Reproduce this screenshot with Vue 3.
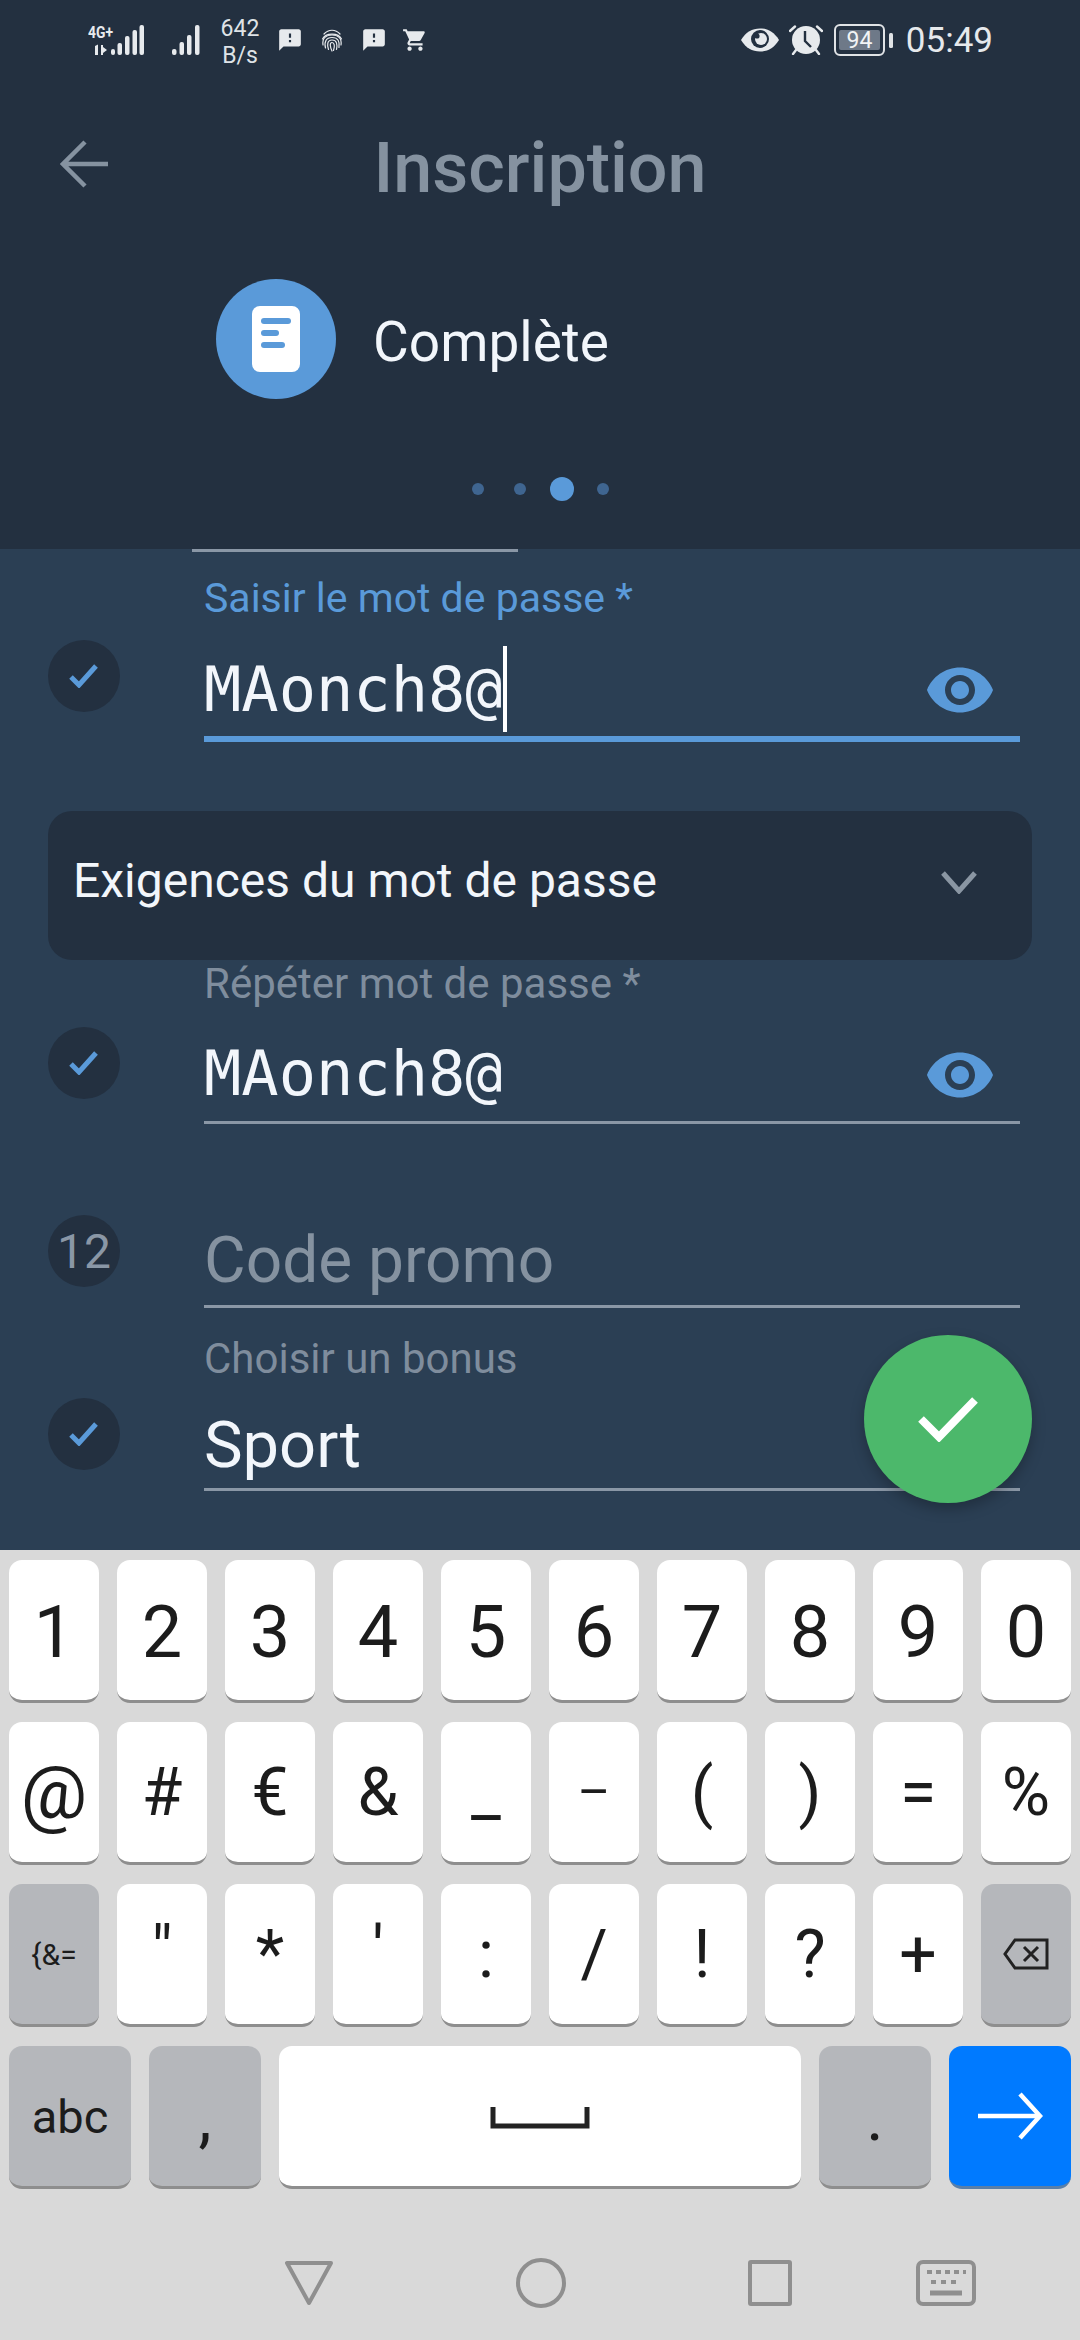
<script setup>
const row1 = ['1','2','3','4','5','6','7','8','9','0']
const row2 = ['@','#','€','&','_','–','(',')','=','%']
const row3 = ['"','*',"'",':','/','!','?','+']
const eyePath = 'M12 4.5C7 4.5 2.73 7.61 1 12c1.73 4.39 6 7.5 11 7.5s9.27-3.11 11-7.5c-1.73-4.39-6-7.5-11-7.5zM12 17c-2.76 0-5-2.24-5-5s2.24-5 5-5 5 2.24 5 5-2.24 5-5 5zm0-8c-1.66 0-3 1.34-3 3s1.34 3 3 3 3-1.34 3-3-1.34-3-3-3z'
const bubble = 'M20 2H4c-1.1 0-1.99.9-1.99 2L2 22l4-4h14c1.1 0 2-.9 2-2V4c0-1.1-.9-2-2-2zm-7 12h-2v-2h2v2zm0-4h-2V6h2v4z'
const cart = 'M7 18c-1.1 0-1.99.9-1.99 2S5.9 22 7 22s2-.9 2-2-.9-2-2-2zM1 2v2h2l3.6 7.59-1.35 2.45c-.16.28-.25.61-.25.96 0 1.1.9 2 2 2h12v-2H7.42c-.14 0-.25-.11-.25-.25l.03-.12.9-1.63h7.45c.75 0 1.41-.41 1.75-1.03l3.58-6.49c.08-.14.12-.31.12-.48 0-.55-.45-1-1-1H5.21l-.94-2H1zm16 16c-1.1 0-1.99.9-1.99 2s.89 2 1.99 2 2-.9 2-2-.9-2-2-2z'
</script>

<template>
  <div class="app">
    <header class="top">
      <div class="status">
        <svg class="sig1" width="57" height="38" viewBox="0 -6 57 38">
          <text x="0" y="13.5" textLength="25" lengthAdjust="spacingAndGlyphs" class="net">4G+</text>
          <path d="M7 22l3-1.5V31H7zM13 21h2v2l4 3-4 3v2h-2z" fill="#e7eaed"/>
          <rect x="23" y="25" width="4" height="6" rx="2" fill="#e7eaed"/>
          <rect x="29.5" y="19" width="4.5" height="12" rx="2" fill="#e7eaed"/>
          <rect x="37" y="12" width="4.5" height="19" rx="2" fill="#e7eaed"/>
          <rect x="44.5" y="6" width="4.5" height="25" rx="2" fill="#e7eaed"/>
          <rect x="51.5" y="1" width="4.5" height="30" rx="2" fill="#e7eaed"/>
        </svg>
        <svg class="sig2" width="33" height="32" viewBox="0 0 33 32">
          <rect x="0" y="25" width="4.5" height="6" rx="2" fill="#e7eaed"/>
          <rect x="7.5" y="18" width="4.5" height="13" rx="2" fill="#e7eaed"/>
          <rect x="15" y="11" width="4.5" height="20" rx="2" fill="#e7eaed"/>
          <rect x="23" y="1" width="4.5" height="30" rx="2" fill="#e7eaed"/>
        </svg>
        <div class="speed"><span>642</span><span>B/s</span></div>
        <svg class="bub1" width="26" height="26" viewBox="0 0 24 24"><path :d="bubble" fill="#e7eaed"/></svg>
        <svg class="finger" width="22" height="24" viewBox="0 0 22 24" fill="none" stroke="#e7eaed" stroke-width="1.2" stroke-linecap="round">
          <path d="M3 6c4.500-5 11.500-5 16 0"/>
          <path d="M1.500 11c3-6.500 16-6.500 19 0"/>
          <path d="M2 17c-1-7 3-10 9-10s10 3 9 10"/>
          <path d="M4.500 20c-1.500-6 .5-10.500 6.500-10.500s8 4 7 10"/>
          <path d="M7.500 21.500c-1.500-4-1.500-9.500 3.500-9.500s5.500 4.500 4.500 9.500"/>
          <path d="M11 23c-2-4-2.500-8.500 0-8.500s3 3.500 1.500 8"/>
        </svg>
        <svg class="bub2" width="26" height="26" viewBox="0 0 24 24"><path :d="bubble" fill="#e7eaed"/></svg>
        <svg class="cartI" width="26" height="26" viewBox="0 0 24 24"><path :d="cart" fill="#e7eaed"/></svg>
        <div class="spacer"></div>
        <svg class="sEye" width="40" height="26" viewBox="0 0 40 26">
          <path d="M1 13C6 5 12 1.500 20 1.500S34 5 39 13c-5 8-11 11.500-19 11.500S6 21 1 13z" fill="#e7eaed"/>
          <circle cx="20" cy="12" r="9" fill="#233040"/>
          <circle cx="21" cy="12" r="6" fill="#e7eaed"/>
          <circle cx="17" cy="9" r="2.600" fill="#233040"/>
        </svg>
        <svg class="alarm" width="34" height="31" viewBox="0 0 34 31">
          <circle cx="17" cy="16" r="14" fill="#e7eaed"/>
          <path d="M16 7v10l6 6" fill="none" stroke="#233040" stroke-width="2.400"/>
          <path d="M1 7l5-4.500M33 7l-5-4.500" stroke="#e7eaed" stroke-width="2.400" stroke-linecap="round"/>
          <path d="M4 30l3-4M30 30l-3-4" stroke="#e7eaed" stroke-width="2.400" stroke-linecap="round"/>
        </svg>
        <svg class="batt" width="60" height="32" viewBox="0 0 60 32">
          <rect x="1" y="1" width="49" height="30" rx="5" fill="none" stroke="#e0e3e6" stroke-width="2"/>
          <rect x="5" y="6" width="41" height="20" rx="2" fill="#6e7988"/>
          <text x="25.500" y="24" text-anchor="middle" class="battT">94</text>
          <rect x="55" y="9" width="4" height="15" rx="1.500" fill="#e0e3e6"/>
        </svg>
        <span class="time">05:49</span>
      </div>

      <div class="bar">
        <svg class="back" width="48" height="48" viewBox="0 0 48 48" fill="none" stroke="#8592a0" stroke-width="4.500">
          <path d="M2 24h46M25 2L3 24l22 22"/>
        </svg>
        <h1 class="title">Inscription</h1>
        <span></span>
      </div>

      <div class="step">
        <div class="stepIcon">
          <div class="doc">
            <i class="l1"></i><i class="l2"></i><i class="l3"></i>
          </div>
        </div>
        <span class="stepText">Complète</span>
      </div>

      <div class="dots">
        <i class="dot d1"></i><i class="dot d2"></i><i class="dot big"></i><i class="dot"></i>
      </div>
    </header>

    <main class="form">
      <div class="stub"></div>

      <section class="field f1">
        <div class="badge">
          <svg width="30" height="24" viewBox="0 0 30 24" fill="none" stroke="#5a9ad9" stroke-width="5"><path d="M2 13l8 8L27 2"/></svg>
        </div>
        <div class="col">
          <div class="label active">Saisir le mot de passe *</div>
          <div class="input activeLine">
            <span class="mono">MAonch8@</span><i class="caret"></i>
            <svg class="eye" width="72" height="72" viewBox="0 0 24 24"><path :d="eyePath" fill="#5a9ad9"/></svg>
          </div>
        </div>
      </section>

      <div class="card">
        <span>Exigences du mot de passe</span>
        <svg width="36" height="24" viewBox="0 0 36 24" fill="none" stroke="#8a96a3" stroke-width="5"><path d="M2 3l16 18L34 3"/></svg>
      </div>

      <section class="field f2">
        <div class="badge">
          <svg width="30" height="24" viewBox="0 0 30 24" fill="none" stroke="#5a9ad9" stroke-width="5"><path d="M2 13l8 8L27 2"/></svg>
        </div>
        <div class="col">
          <div class="label">Répéter mot de passe *</div>
          <div class="input">
            <span class="mono">MAonch8@</span>
            <svg class="eye" width="72" height="72" viewBox="0 0 24 24"><path :d="eyePath" fill="#5a9ad9"/></svg>
          </div>
        </div>
      </section>

      <section class="field f3">
        <div class="badge num">12</div>
        <div class="col">
          <div class="input plain"><span class="ph">Code promo</span></div>
        </div>
      </section>

      <section class="field f4">
        <div class="badge">
          <svg width="30" height="24" viewBox="0 0 30 24" fill="none" stroke="#5a9ad9" stroke-width="5"><path d="M2 13l8 8L27 2"/></svg>
        </div>
        <div class="col">
          <div class="label">Choisir un bonus</div>
          <div class="input plain"><span class="val">Sport</span></div>
        </div>
      </section>

      <button class="fab">
        <svg width="60" height="46" viewBox="0 0 60 46" fill="none" stroke="#fff" stroke-width="8"><path d="M3 23l18 18L57 4"/></svg>
      </button>
    </main>

    <footer class="kb">
      <div class="row">
        <div v-for="k in row1" :key="k" class="key digit">{{ k }}</div>
      </div>
      <div class="row">
        <div v-for="k in row2" :key="k" class="key sym" :class="{ at: k === '@', dash: k === '–', pct: k === '%' }">{{ k }}</div>
      </div>
      <div class="row">
        <div class="key gray small">{&amp;=</div>
        <div v-for="k in row3" :key="k" class="key sym" :class="{ quote: k === '&quot;' || k === '\'' }">{{ k }}</div>
        <div class="key gray">
          <svg width="46" height="32" viewBox="0 0 46 32" fill="none" stroke="#222" stroke-width="3">
            <path d="M12 2h32v28H12L2 16z"/>
            <path d="M21 9l14 14M35 9L21 23"/>
          </svg>
        </div>
      </div>
      <div class="row last">
        <div class="key gray abc">abc</div>
        <div class="key gray sym comma">,</div>
        <div class="key space">
          <svg width="100" height="24" viewBox="0 0 100 24" fill="none" stroke="#222" stroke-width="5"><path d="M3 1v19h94V1"/></svg>
        </div>
        <div class="key gray sym dotk">.</div>
        <div class="key go">
          <svg width="66" height="48" viewBox="0 0 66 48" fill="none" stroke="#fff" stroke-width="4.500"><path d="M1 24h62M43 2l20 22-20 22"/></svg>
        </div>
      </div>
      <nav class="nav">
        <svg width="50" height="46" viewBox="0 0 50 46" fill="none" stroke="#8f8f8f" stroke-width="4" stroke-linejoin="round"><path d="M3 3h44L25 43z"/></svg>
        <svg width="50" height="50" viewBox="0 0 50 50" fill="none" stroke="#8f8f8f" stroke-width="4"><circle cx="25" cy="25" r="23"/></svg>
        <svg width="44" height="46" viewBox="0 0 44 46" fill="none" stroke="#8f8f8f" stroke-width="4" stroke-linejoin="round"><rect x="2" y="2" width="40" height="42" rx="1"/></svg>
        <svg width="60" height="46" viewBox="0 0 60 46" fill="none" stroke="#8f8f8f" stroke-width="4"><rect x="2" y="2" width="56" height="42" rx="5"/><path d="M11 12h5M20 12h5M29 12h5M38 12h5M47 12h3M15 22h5M25 22h5M35 22h5" stroke-width="4"/><path d="M14 33h32" stroke-width="5"/></svg>
      </nav>
    </footer>
  </div>
</template>

<style>
html, body { margin: 0; padding: 0; }
</style>

<style scoped>
* { box-sizing: border-box; }
.app {
  width: 1080px; height: 2340px; overflow: hidden;
  display: flex; flex-direction: column;
  font-family: Roboto, "Noto Sans", sans-serif;
}
.top { background: #233040; height: 549px; flex: none; display: flex; flex-direction: column; }

.status { height: 80px; display: flex; align-items: flex-start; padding-left: 88px; }
.status svg { display: block; flex: none; }
.sig1 { margin-top: 18px; }
.sig2 { margin: 24px 0 0 27px; }
.net { font: 700 17px Roboto, sans-serif; fill: #e7eaed; }
.speed { margin: 15px 0 0 15px; width: 40px; display: flex; flex-direction: column; align-items: center; color: #dfe3e7; font-size: 23px; line-height: 27px; }
.bub1 { margin: 27px 0 0 17px; }
.finger { margin: 28px 0 0 18px; }
.bub2 { margin: 27px 0 0 18px; }
.cartI { margin: 27px 0 0 15px; }
.spacer { flex: 1; }
.sEye { margin: 27px 0 0 0; }
.alarm { margin: 24px 0 0 9px; }
.batt { margin: 24px 0 0 11px; }
.battT { font: 400 23px Roboto, sans-serif; fill: #f2f4f6; }
.time { margin: 20px 87px 0 12px; color: #e6e9ec; font-size: 35px; line-height: 42px; }

.bar { height: 100px; margin-top: 38px; display: grid; grid-template-columns: 1fr auto 1fr; align-items: center; }
.back { margin: 0 0 0 60px; position: relative; top: -4px; }
.title { margin: 0; font-size: 70px; line-height: 100px; font-weight: 500; color: #8592a0; }

.step { margin: 61px 0 0 216px; display: flex; align-items: center; gap: 37px; }
.stepIcon { width: 120px; height: 120px; border-radius: 50%; background: #5a9ad9; display: flex; align-items: center; justify-content: center; }
.doc { width: 48px; height: 66px; background: #fff; border-radius: 8px; display: flex; flex-direction: column; gap: 6px; padding: 12px 9px 0; }
.doc i { display: block; height: 6px; border-radius: 3px; background: #5a9ad9; }
.doc .l1 { width: 30px; }
.doc .l2 { width: 18px; }
.doc .l3 { width: 24px; }
.stepText { color: #f2f6fb; font-size: 55px; line-height: 64px; padding-top: 6px; }

.dots { margin-top: 78px; display: flex; align-items: center; justify-content: center; }
.dot { display: block; width: 12px; height: 12px; border-radius: 50%; background: #3f6590; }
.dot.d1 { margin-right: 30px; }
.dot.d2 { margin-right: 24px; }
.dot.big { width: 24px; height: 24px; background: #5a9ad9; margin-right: 23px; }

.form { position: relative; flex: none; height: 1001px; background: #2b3f54; color: #f2f6fb; }
.stub { width: 326px; height: 3px; margin-left: 192px; background: #8a97a6; }

.field { display: grid; grid-template-columns: 72px 816px; column-gap: 84px; padding-left: 48px; }
.badge { width: 72px; height: 72px; border-radius: 50%; background: #233040; display: flex; align-items: center; justify-content: center; color: #8a97a6; }
.badge.num { font-size: 48px; }
.col { display: flex; flex-direction: column; }
.label { height: 48px; line-height: 48px; font-size: 42px; color: #7f8d9d; }
.label.active { color: #5a9ad9; font-size: 41px; }
.input { position: relative; display: flex; align-items: center; border-bottom: 3px solid #8a97a6; }
.activeLine { border-bottom: 6px solid #5a9ad9; }
.mono { font-family: "DejaVu Sans Mono", "Liberation Mono", monospace; font-size: 62px; color: #f2f6fb; }
.caret { display: block; width: 4px; height: 86px; background: #fff; }
.eye { position: absolute; right: 24px; }
.ph { font-size: 64px; color: #8592a0; }
.val { font-size: 65px; color: #f2f6fb; }

.f1 { height: 188px; padding-top: 22px; }
.f1 .badge { margin-top: 66px; }
.f1 .input { height: 120px; padding-top: 20px; }
.f1 .eye { top: 32px; }

.card { margin: 71px 48px 0; height: 149px; background: #233040; border-radius: 24px; padding: 0 55px 0 25px; display: flex; align-items: center; justify-content: space-between; font-size: 48px; color: #f2f6fb; }
.card span { position: relative; top: -5px; }
.card svg { position: relative; top: -4px; }

.f2 { padding-top: 0; height: 165px; }
.f2 .badge { margin-top: 67px; }
.f2 .input { height: 116px; padding-top: 17px; }
.f2 .eye { top: 31px; }

.f3 { margin-top: 0; height: 181px; padding-top: 90px; }
.f3 .badge { margin-top: 0; }
.f3 .input { height: 93px; }

.f4 { height: 190px; padding-top: 29px; }
.f4 .badge { margin-top: 63px; }
.f4 .input { height: 108px; padding-top: 19px; }

.fab { position: absolute; left: 864px; top: 786px; width: 168px; height: 168px; border: 0; padding: 0; border-radius: 50%; background: #4cb86b; box-shadow: 0 6px 14px rgba(0,0,0,.25); display: flex; align-items: center; justify-content: center; }

.kb { flex: 1; background: #d9d9d9; padding: 10px 9px 0; display: flex; flex-direction: column; gap: 19px; }
.row { display: grid; grid-template-columns: repeat(10, 90px); gap: 18px; }
.row.last { grid-template-columns: 122px 112px 522px 112px 122px; }
.key { height: 143px; background: #fff; border-radius: 13px; border-bottom: 3px solid #8e8e8e; display: flex; align-items: center; justify-content: center; color: #1c1c1c; }
.gray { background: #b5b7bb; }
.digit { font-size: 72px; font-weight: 400; padding-top: 4px; }
.sym { font-size: 66px; }
.sym.at { font-size: 74px; }
.sym.dash { font-size: 50px; }
.sym.pct { font-size: 66px; }
.sym.quote { padding-bottom: 8px; }
.small { font-size: 30px; }
.abc { font-size: 47px; }
.space { background: #fff; }
.space svg { position: relative; top: 2px; }
.go { background: #007aff; border-bottom-color: #5a7fa8; }
.comma { padding-top: 2px; }
.dotk { padding-top: 2px; }
.nav { margin-top: 47px; padding-left: 275px; display: flex; align-items: center; height: 56px; }
.nav svg { display: block; flex: none; }
.nav svg:nth-child(1) { margin-right: 182px; }
.nav svg:nth-child(2) { margin-right: 182px; }
.nav svg:nth-child(3) { margin-right: 124px; }
</style>
